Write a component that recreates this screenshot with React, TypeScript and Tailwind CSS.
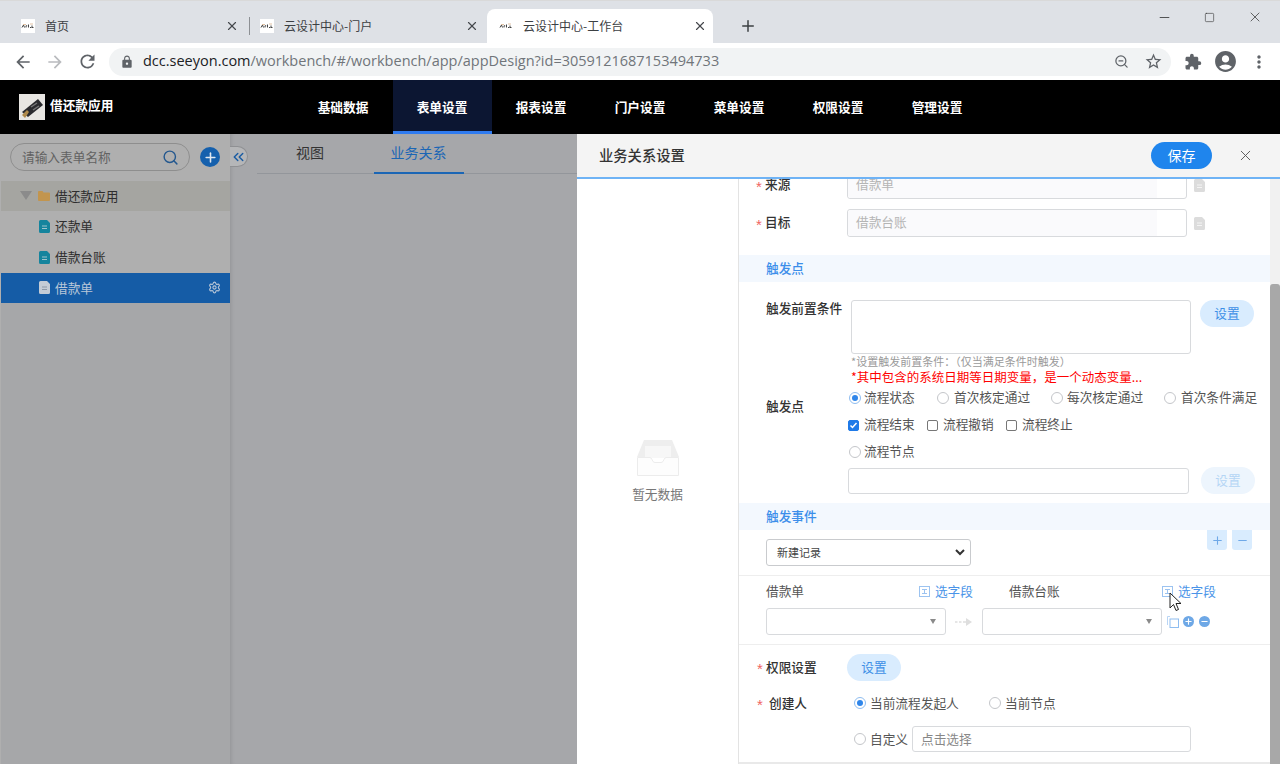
import { ChevronsLeft, Minus, Plus, Search, Settings, Square, X, ZoomOut } from "lucide-react";
import { MdAccountCircle, MdArrowBack, MdArrowForward, MdExtension, MdLock, MdMoreVert, MdRefresh, MdStarBorder } from "react-icons/md";

const CJK = "font-['Noto_Sans_CJK_SC','Liberation_Sans',sans-serif]";

function Favicon() {
  return (
    <svg width="14" height="14" viewBox="0 0 14 14" className="shrink-0">
      <rect width="14" height="14" fill="#fff" />
      <path d="M1 8.500l1.500-2.500 1 2.500M5 8.500V6.800h1.200M7.500 5.500v3M9 8.500h1.500M11 6.500v2h1.500" stroke="#444" strokeWidth="1" fill="none" />
      <path d="M2 5.500h3M9 5h3" stroke="#c96" strokeWidth=".6" />
    </svg>
  );
}

function Tab({ title, className }: { title: string; className: string }) {
  return (
    <div className={`flex h-[34px] shrink-0 items-center ${className}`}>
      <Favicon />
      <span className="ml-[10px] flex-1 pb-[1px] text-[12px] leading-none text-[#3c4043]">{title}</span>
      <X size={14} strokeWidth={2} className="text-[#45484c]" />
    </div>
  );
}

function BrowserChrome() {
  return (
    <div className={CJK}>
      <div className="flex h-[43px] items-end border-t border-[#d9d9d9] bg-[#dee1e6]">
        <Tab title="首页" className="w-[249px] pl-[21px] pr-[10px]" />
        <div className="mb-[8px] h-[18px] w-px bg-[#8d9094]" />
        <Tab title="云设计中心-门户" className="w-[237px] pl-[10px] pr-[8px]" />
        <Tab title="云设计中心-工作台" className="w-[226px] rounded-t-lg bg-white pl-[12px] pr-[6px]" />
        <Plus size={18} strokeWidth={2} className="mb-[8px] ml-[26px] text-[#3c4043]" />
        <div className="flex-1" />
        <div className="mb-[18px] flex items-center gap-[30px] pr-[17px] text-[#333]">
          <Minus size={15} strokeWidth={1.3} />
          <Square size={11} strokeWidth={1.3} className="mx-[2px]" />
          <X size={16} strokeWidth={1.1} />
        </div>
      </div>
      <div className="flex h-[37px] items-center bg-white pl-[13px] text-[#5f6368]">
        <MdArrowBack size={20} />
        <MdArrowForward size={20} className="ml-[12px] text-[#b9bbbe]" />
        <MdRefresh size={21} className="ml-[12px]" />
        <div className="ml-[11px] flex h-[28px] w-[1062px] items-center rounded-full bg-[#f1f3f4] pl-[11px] pr-[8px]">
          <MdLock size={14} />
          <span className="ml-[9px] flex-1 whitespace-nowrap pb-[2px] font-['Open_Sans',sans-serif] text-[14.5px] text-[#70757a]">
            <span className="text-[#202124]">dcc.seeyon.com</span>/workbench/#/workbench/app/appDesign?id=3059121687153494733
          </span>
          <ZoomOut size={15} className="mr-[15px]" />
          <MdStarBorder size={19} />
        </div>
        <MdExtension size={18} className="ml-[13px]" />
        <MdAccountCircle size={25} className="ml-[11px]" />
        <MdMoreVert size={20} className="ml-[11px]" />
      </div>
    </div>
  );
}

const NAV = ["基础数据", "表单设置", "报表设置", "门户设置", "菜单设置", "权限设置", "管理设置"];

function TopNav() {
  return (
    <div className={`flex h-[54px] bg-black text-white ${CJK}`}>
      <div className="flex w-[294px] items-start pl-[19px] pt-[14px]">
        <svg width="26" height="26" viewBox="0 0 26 26" className="shrink-0">
          <rect width="26" height="26" fill="#e8e6e2" />
          <path d="M3 18L19 5l5 6L9 23z" fill="#2b2b2e" />
          <path d="M12 13l6-4M14 16l6-4" stroke="#777" strokeWidth="1.500" />
          <path d="M3 21l5-5 2 2-4 6z" fill="#b08a4a" />
        </svg>
        <span className="ml-[5px] text-[12.7px] leading-[22px] font-bold">借还款应用</span>
      </div>
      {NAV.map((n) => (
        <div
          key={n}
          className={`flex h-full w-[99px] items-center justify-center pb-[1px] pr-[1px] text-[12.7px] font-bold ${n === "表单设置" ? "border-b-[3px] border-[#2f7bf0] bg-[#0c1632] pt-[3px]" : ""}`}
        >
          {n}
        </div>
      ))}
    </div>
  );
}

function DocIcon({ color, mark }: { color: string; mark: string }) {
  return (
    <svg width="11" height="13" viewBox="0 0 11 13" className="shrink-0">
      <path d="M1.500 0H8l3 3v8.500a1.500 1.500 0 0 1-1.500 1.500h-8A1.500 1.500 0 0 1 0 11.500v-10A1.500 1.500 0 0 1 1.500 0z" fill={color} />
      <path d="M3 6h5M3 8.500h5" stroke={mark} strokeWidth="1" />
    </svg>
  );
}

function TreeRow({ label, color, mark, active }: { label: string; color: string; mark: string; active?: boolean }) {
  return (
    <div className={`flex items-center pb-[1px] pl-[38px] pr-[9px] text-[12.7px] ${active ? "h-[30px] bg-[#155ca6] text-[#b9c7d8]" : "h-[31px] text-[#2e2e2e]"}`}>
      <DocIcon color={color} mark={mark} />
      <span className="ml-[5px] flex-1">{label}</span>
      {active && <Settings size={13} className="text-[#b9c7d8]" />}
    </div>
  );
}

function Sidebar() {
  return (
    <div className="flex w-[230px] shrink-0 flex-col bg-[#afafaf] pt-[9px] pl-[1px]">
      <div className="flex items-center pl-[9px]">
        <div className="flex h-[28px] w-[180px] items-center rounded-full border border-[#8e8e8e] pl-[11px] pr-[10px] text-[12.7px] text-[#626262]">
          <span className="flex-1">请输入表单名称</span>
          <Search size={17} className="text-[#24588f]" />
        </div>
        <div className="ml-[10px] flex h-[20px] w-[20px] items-center justify-center rounded-full bg-[#1560ad]">
          <Plus size={15} strokeWidth={2.500} className="text-[#dfe7f0]" />
        </div>
      </div>
      <div className="mt-[10px] flex h-[30px] items-center bg-[#a5a5a1] pb-[1px] pl-[19px] text-[12.7px] text-[#2e2e2e]">
        <span className="h-0 w-0 border-x-[6px] border-t-[9px] border-x-transparent border-t-[#8b8b8b]" />
        <svg width="12" height="10" viewBox="0 0 12 10" className="ml-[6px]">
          <path d="M1 0h3.500l1 1.500H11a1 1 0 0 1 1 1V9a1 1 0 0 1-1 1H1a1 1 0 0 1-1-1V1a1 1 0 0 1 1-1z" fill="#c2954e" />
        </svg>
        <span className="ml-[5px]">借还款应用</span>
      </div>
      <TreeRow label="还款单" color="#15849d" mark="#a0c4cc" />
      <TreeRow label="借款台账" color="#15849d" mark="#a0c4cc" />
      <TreeRow label="借款单" color="#c4ccd6" mark="#8d99a8" active />
      <div className="flex-1 bg-[#a6a7a9]" />
    </div>
  );
}

function Middle() {
  return (
    <div className="relative flex w-[347px] shrink-0 flex-col bg-[#a6a7aa] pl-[27px] shadow-[inset_4px_0_4px_-3px_rgba(0,0,0,.12)]">
      <div className="absolute left-0 top-[12px] flex h-[21px] w-[18px] items-center justify-center rounded-r-full border border-l-0 border-[#8f9093] bg-[#b5b6b8]">
        <ChevronsLeft size={18} strokeWidth={2} className="text-[#1a5ca3]" />
      </div>
      <div className="flex h-[40px] border-b border-[#93969b] text-[14px]">
        <div className="flex w-[117px] justify-center pt-[8px] pr-[11px] text-[#333]">视图</div>
        <div className="flex h-[40px] w-[90px] justify-center border-b-2 border-[#1b66b5] pt-[8px] pr-[1px] text-[#1b66b5]">业务关系</div>
      </div>
    </div>
  );
}

function Radio({ on, className = "" }: { on?: boolean; className?: string }) {
  return (
    <span className={`flex h-[12px] w-[12px] shrink-0 items-center justify-center rounded-full border ${on ? "border-[#8fbdf0]" : "border-[#c4c6ca]"} bg-white ${className}`}>
      {on && <span className="h-[6px] w-[6px] rounded-full bg-[#2f86ea]" />}
    </span>
  );
}

function Check({ on }: { on?: boolean }) {
  return (
    <span className={`flex h-[11px] w-[11px] shrink-0 items-center justify-center rounded-[2px] border ${on ? "border-[#1f7ae8] bg-[#1f7ae8]" : "border-[#777]"}`}>
      {on && (
        <svg width="9" height="9" viewBox="0 0 9 9">
          <path d="M1.500 4.500l2 2 4-4.500" stroke="#fff" strokeWidth="1.500" fill="none" />
        </svg>
      )}
    </span>
  );
}

function SetBtn({ faded }: { faded?: boolean }) {
  return (
    <div className={`flex h-[27px] w-[54px] items-center justify-center rounded-full pb-[1px] text-[12.7px] ${faded ? "bg-[#edf5fd] text-[#b5d5f5]" : "bg-[#d9ecfe] text-[#3d8fe6]"}`}>
      设置
    </div>
  );
}

function Star() {
  return <span className="w-[9px] translate-y-[1px] font-['Liberation_Sans',sans-serif] text-[15px] leading-none text-[#f0655f]">*</span>;
}

function Band({ title }: { title: string }) {
  return <div className="flex h-[27px] items-center bg-[#f3f8fe] pb-[1px] pl-[27px] text-[12.7px] font-medium text-[#3b8eea]">{title}</div>;
}

function SourceRow({ label, value, top }: { label: string; value: string; top: string }) {
  return (
    <div className={`flex h-[28px] items-center pl-[17px] ${top}`}>
      <Star />
      <span className="w-[82px] pb-[2px] text-[12.7px] font-medium text-[#333]">{label}</span>
      <div className="flex h-full w-[340px] rounded-[3px] border border-[#d8dadd] bg-white">
        <div className="flex h-full w-[309px] items-center rounded-l-[3px] bg-[#fafafc] pb-[2px] pl-[8px] text-[12.7px] text-[#b5b5b5]">{value}</div>
      </div>
      <div className="ml-[7px]">
        <DocIcon color="#dcdcdc" mark="#f4f4f4" />
      </div>
    </div>
  );
}

function FieldSelect() {
  return (
    <div className="flex h-[27px] w-[180px] items-center justify-end rounded-[3px] border border-[#d8dadd] pr-[9px]">
      <span className="h-0 w-0 border-x-[3.500px] border-t-[5px] border-x-transparent border-t-[#8a8a8a]" />
    </div>
  );
}

function PickField({ label, className }: { label: string; className: string }) {
  return (
    <div className={`flex items-center text-[12.7px] ${className}`}>
      <span className="flex-1 text-[#555]">{label}</span>
      <svg width="11" height="11" viewBox="0 0 11 11" className="mr-[5px]">
        <rect x=".5" y=".5" width="10" height="10" fill="none" stroke="#9cc3f0" />
        <path d="M3 3.500h5M3 7.500h5M5.500 3.500v4" stroke="#9cc3f0" />
      </svg>
      <span className="text-[#4a94e8]">选字段</span>
    </div>
  );
}

function Form() {
  return (
    <div className="flex-1 overflow-hidden border-b-2 border-[#e9e9e9]">
      <SourceRow label="来源" value="借款单" top="-mt-[8px]" />
      <SourceRow label="目标" value="借款台账" top="mt-[10px]" />
      <div className="mt-[18px]">
        <Band title="触发点" />
      </div>

      <div className="mt-[18px] flex pl-[27px]">
        <span className="w-[85px] text-[12.7px] font-medium leading-[16px] text-[#333]">触发前置条件</span>
        <div className="h-[54px] w-[340px] rounded-[3px] border border-[#d8dadd]" />
        <div className="ml-[9px]">
          <SetBtn />
        </div>
      </div>
      <div className="ml-[112px] text-[11px] leading-[14px] text-[#9a9a9a]">*设置触发前置条件：（仅当满足条件时触发）</div>
      <div className="ml-[112px] pb-[1px] text-[12.5px] leading-[17px] text-[#f00]">*其中包含的系统日期等日期变量，是一个动态变量...</div>

      <div className="mt-[3px] flex">
        <span className="w-[109px] pl-[27px] pt-[8px] text-[12.7px] font-medium leading-[18px] text-[#333]">触发点</span>
        <div className="flex flex-col text-[12.7px] leading-[16px] text-[#555]">
          <div className="flex h-[18px] items-center pl-[1px]">
            <Radio on />
            <span className="ml-[3px] w-[73px] pb-[2px]">流程状态</span>
            <Radio />
            <span className="ml-[5px] w-[97px] pb-[2px]">首次核定通过</span>
            <Radio />
            <span className="ml-[4px] w-[97px] pb-[2px]">每次核定通过</span>
            <Radio />
            <span className="ml-[5px] whitespace-nowrap pb-[2px]">首次条件满足</span>
          </div>
          <div className="mt-[9px] flex h-[18px] items-center">
            <Check on />
            <span className="ml-[5px] w-[63px] pb-[2px]">流程结束</span>
            <Check />
            <span className="ml-[5px] w-[63px] pb-[2px]">流程撤销</span>
            <Check />
            <span className="ml-[5px] pb-[2px]">流程终止</span>
          </div>
          <div className="mt-[9px] flex h-[18px] items-center pl-[1px]">
            <Radio />
            <span className="ml-[3px] pb-[2px]">流程节点</span>
          </div>
          <div className="mt-[7px] flex items-center">
            <div className="h-[26px] w-[341px] rounded-[3px] border border-[#d8dadd]" />
            <div className="ml-[12px] -mt-[2px]">
              <SetBtn faded />
            </div>
          </div>
        </div>
      </div>

      <div className="mt-[9px]">
        <Band title="触发事件" />
      </div>
      <div className="flex h-[46px] items-start border-b border-[#eeeeee] pl-[27px]">
        <div className="mt-[9px] flex h-[27px] w-[205px] items-center justify-between rounded-[3px] border border-[#c9cbce] pl-[10px] pr-[5px] text-[11px] text-[#444]">
          新建记录
          <svg width="10" height="7" viewBox="0 0 10 7">
            <path d="M1 1l4 4 4-4" stroke="#333" strokeWidth="2" fill="none" />
          </svg>
        </div>
        <div className="ml-[236px] flex h-[20px] w-[20px] items-center justify-center rounded-b-[3px] bg-[#d9ecfe] text-[#6fa9e8]">
          <Plus size={13} />
        </div>
        <div className="ml-[5px] flex h-[20px] w-[20px] items-center justify-center rounded-b-[3px] bg-[#d9ecfe] text-[#6fa9e8]">
          <Minus size={13} />
        </div>
      </div>

      <div className="flex h-[69px] flex-col border-b border-[#eeeeee] pl-[27px]">
        <div className="mt-[6px] flex h-[18px]">
          <PickField label="借款单" className="w-[207px]" />
          <PickField label="借款台账" className="ml-[36px] w-[207px]" />
        </div>
        <div className="mt-[8px] flex items-center">
          <FieldSelect />
          <svg width="18" height="10" viewBox="0 0 18 10" className="mx-[9px]">
            <path d="M0 5h2.500M4 5h2.500M8 5h4" stroke="#dedede" strokeWidth="1.500" />
            <path d="M11 1l6 4-6 4z" fill="#dedede" />
          </svg>
          <FieldSelect />
          <svg width="12" height="12" viewBox="0 0 12 12" className="ml-[5px]">
            <path d="M3 .5H.5V9" stroke="#b9d5f5" fill="none" />
            <rect x="3" y="3" width="8.500" height="8.500" fill="none" stroke="#8fbdf0" />
          </svg>
          <span className="ml-[4px] flex h-[11px] w-[11px] items-center justify-center rounded-full bg-[#6ea8e6]">
            <Plus size={9} strokeWidth={3} className="text-white" />
          </span>
          <span className="ml-[5px] flex h-[11px] w-[11px] items-center justify-center rounded-full bg-[#6ea8e6]">
            <Minus size={9} strokeWidth={3} className="text-white" />
          </span>
        </div>
      </div>

      <div className="mt-[9px] flex h-[27px] items-center pl-[18px]">
        <Star />
        <span className="w-[81px] pb-[2px] text-[12.7px] font-medium text-[#333]">权限设置</span>
        <SetBtn />
      </div>
      <div className="mt-[13px] flex h-[18px] items-center pl-[18px] text-[12.7px] text-[#555]">
        <Star />
        <span className="ml-[3px] w-[85px] pb-[1px] font-medium text-[#333]">创建人</span>
        <Radio on />
        <span className="ml-[4px] w-[119px] pb-[1px]">当前流程发起人</span>
        <Radio />
        <span className="ml-[4px] pb-[1px]">当前节点</span>
      </div>
      <div className="mt-[14px] flex h-[26px] items-center pl-[115px] text-[12.7px] text-[#555]">
        <Radio />
        <span className="ml-[4px] w-[42px]">自定义</span>
        <div className="flex h-full w-[279px] items-center rounded-[3px] border border-[#d8dadd] pl-[8px] text-[#888]">点击选择</div>
      </div>
    </div>
  );
}

function Drawer() {
  return (
    <div className="flex w-[703px] shrink-0 flex-col bg-white">
      <div className="flex h-[45px] shrink-0 items-center border-b-2 border-[#6fb3f5] bg-[#f4f4f4] pl-[22px] pr-[26px]">
        <span className="flex-1 pb-[2px] text-[14.3px] font-medium text-[#333]">业务关系设置</span>
        <div className="flex h-[27px] w-[61px] items-center justify-center rounded-full bg-[#1f85ed] pb-[1px] text-[14px] text-white">保存</div>
        <X size={17} strokeWidth={1.300} className="ml-[25px] text-[#555]" />
      </div>
      <div className="flex min-h-0 flex-1">
        <div className="flex w-[162px] shrink-0 flex-col items-center justify-center border-r border-[#e3e3e3]">
          <svg width="42" height="36" viewBox="0 0 42 36">
            <path d="M7 0h28l7 17H0z" fill="#eeeeee" />
            <path d="M8 6h26v12H8z" fill="#f7f7f7" />
            <path d="M.500 17.500H13q1 0 2 2l1 2q1 1 2 1h6q1 0 2-1l1-2q1-2 2-2h12.500V35.500H.500z" fill="#fdfdfd" stroke="#ececec" />
          </svg>
          <span className="mt-[9px] text-[12.7px] leading-[18px] text-[#777]">暂无数据</span>
        </div>
        <Form />
        <div className="w-[10px] shrink-0 bg-[#f1f1f1] pt-[105px]">
          <div className="h-full w-full rounded-t-[3px] bg-[#a8a8a8]" />
        </div>
      </div>
    </div>
  );
}

export default function App() {
  return (
    <div className={`relative h-[764px] w-[1280px] overflow-hidden bg-white ${CJK}`}>
      <BrowserChrome />
      <TopNav />
      <div className="flex h-[630px]">
        <Sidebar />
        <Middle />
        <Drawer />
      </div>
      {/* mouse pointer caught in the screenshot */}
      <svg width="14" height="20" viewBox="0 0 14 20" className="absolute left-[1169px] top-[592px]">
        <path d="M1 1v15l3.500-3.500 2.500 6 2.500-1-2.500-6H12z" fill="#fff" stroke="#222" strokeWidth="1" />
      </svg>
    </div>
  );
}
